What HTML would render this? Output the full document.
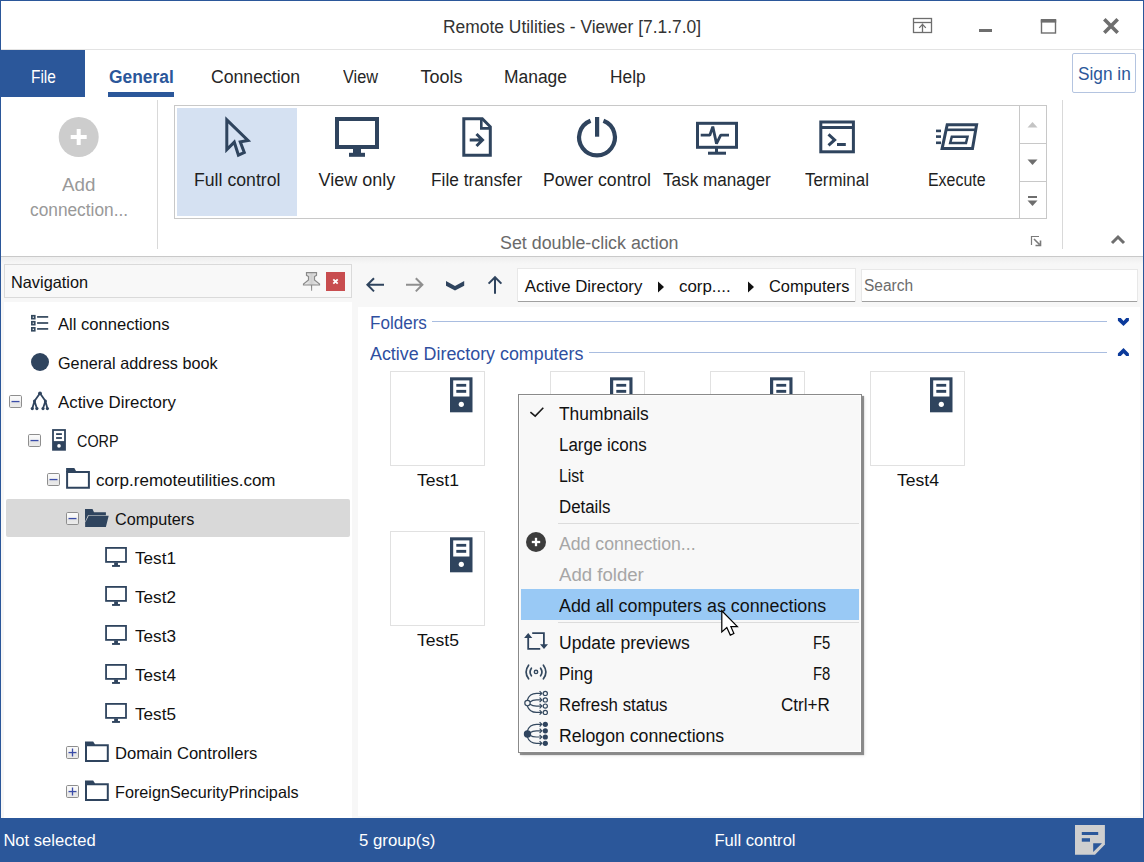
<!DOCTYPE html>
<html><head><meta charset="utf-8"><title>Remote Utilities - Viewer</title>
<style>
html,body{margin:0;padding:0;}
body{width:1144px;height:862px;position:relative;overflow:hidden;background:#fff;font-family:"Liberation Sans",sans-serif;}
.t{position:absolute;white-space:nowrap;line-height:1;font-family:"Liberation Sans",sans-serif;}
svg{overflow:visible;}
</style></head><body>
<svg width="0" height="0" style="position:absolute"><defs><linearGradient id="eg" x1="0" y1="0" x2="0" y2="1"><stop offset="0" stop-color="#fbfbfb"/><stop offset="0.5" stop-color="#f3f3f3"/><stop offset="0.55" stop-color="#e4e4e4"/><stop offset="1" stop-color="#ececec"/></linearGradient></defs></svg>
<div style="position:absolute;left:0px;top:0px;width:1144px;height:862px;background:#ffffff"></div>
<div style="position:absolute;left:0px;top:257px;width:1144px;height:561px;background:#f7f7f7"></div>
<div style="position:absolute;left:0px;top:256px;width:1144px;height:1px;background:#c9c9c9"></div>
<div style="position:absolute;left:1px;top:257px;width:1142px;height:7px;background:linear-gradient(#eeeeee,#f7f7f7)"></div>
<div style="position:absolute;left:0px;top:49px;width:1144px;height:1px;background:#e3e3e3"></div>
<div style="position:absolute;left:0px;top:0px;width:1144px;height:1px;background:#2b579a"></div>
<div style="position:absolute;left:0px;top:0px;width:1px;height:862px;background:#2b579a"></div>
<div style="position:absolute;left:1143px;top:0px;width:1px;height:862px;background:#2b579a"></div>
<div class="t" style="left:442.7px;top:18.0px;font-size:18px;color:#333;transform:scaleX(0.9674);transform-origin:0 0;">Remote Utilities - Viewer [7.1.7.0]</div>
<svg style="position:absolute;left:912px;top:17px;" width="22" height="18" viewBox="0 0 22 18"><rect x="1.5" y="1.5" width="18" height="14" fill="none" stroke="#6e6e6e" stroke-width="1.3"/><line x1="1.5" y1="5.5" x2="19.5" y2="5.5" stroke="#6e6e6e" stroke-width="1.3"/><path d="M10.5 15.5 V6.5 M7.2 10.9 L10.5 7.4 L13.8 10.9" fill="none" stroke="#6e6e6e" stroke-width="1.3"/></svg>
<div style="position:absolute;left:979px;top:29px;width:13px;height:3px;background:#6e6e6e"></div>
<svg style="position:absolute;left:1040px;top:18px;" width="17" height="16" viewBox="0 0 17 16"><rect x="1.5" y="2.5" width="14" height="12.5" fill="none" stroke="#6e6e6e" stroke-width="1.4"/><rect x="0.8" y="1" width="15.4" height="3.6" fill="#6e6e6e"/></svg>
<svg style="position:absolute;left:1102px;top:17px;" width="18" height="18" viewBox="0 0 18 18"><path d="M2.3 2.3 L15.7 15.7 M15.7 2.3 L2.3 15.7" stroke="#6e6e6e" stroke-width="3.6"/></svg>
<div style="position:absolute;left:1px;top:50px;width:84px;height:47px;background:#2b579a"></div>
<div class="t" style="left:30.9px;top:68.0px;font-size:18px;color:#fff;transform:scaleX(0.8586);transform-origin:0 0;">File</div>
<div class="t" style="left:108.6px;top:68.0px;font-size:18px;color:#2b579a;font-weight:bold;transform:scaleX(0.9657);transform-origin:0 0;">General</div>
<div style="position:absolute;left:108px;top:92px;width:66px;height:5px;background:#2b579a"></div>
<div class="t" style="left:211.4px;top:68.0px;font-size:18px;color:#262626;transform:scaleX(0.9791);transform-origin:0 0;">Connection</div>
<div class="t" style="left:342.5px;top:68.0px;font-size:18px;color:#262626;transform:scaleX(0.9050);transform-origin:0 0;">View</div>
<div class="t" style="left:420.5px;top:68.0px;font-size:18px;color:#262626;">Tools</div>
<div class="t" style="left:504.4px;top:68.0px;font-size:18px;color:#262626;transform:scaleX(0.9677);transform-origin:0 0;">Manage</div>
<div class="t" style="left:610.0px;top:68.0px;font-size:18px;color:#262626;transform:scaleX(0.9622);transform-origin:0 0;">Help</div>
<div style="position:absolute;left:1072px;top:53px;width:64px;height:40px;border:1px solid #b4c4e0;box-sizing:border-box;border-radius:2px;background:#fff"></div>
<div class="t" style="left:1077.6px;top:65.0px;font-size:18px;color:#2b579a;transform:scaleX(0.9582);transform-origin:0 0;">Sign in</div>
<svg style="position:absolute;left:58px;top:116px;" width="42" height="42" viewBox="0 0 42 42"><circle cx="20.7" cy="21" r="20" fill="#cdcdcd"/><rect x="18.7" y="13" width="4" height="16" fill="#fff"/><rect x="12.7" y="19" width="16" height="4" fill="#fff"/></svg>
<div class="t" style="left:62.0px;top:176.0px;font-size:18px;color:#999;transform:scaleX(1.0437);transform-origin:0 0;">Add</div>
<div class="t" style="left:30.2px;top:201.0px;font-size:18px;color:#999;transform:scaleX(0.9608);transform-origin:0 0;">connection...</div>
<div style="position:absolute;left:157px;top:100px;width:1px;height:149px;background:#d9d9d9"></div>
<div style="position:absolute;left:174px;top:105px;width:873px;height:114px;border:1px solid #c8c8c8;box-sizing:border-box;background:#fff"></div>
<div style="position:absolute;left:1019px;top:105px;width:1px;height:114px;background:#c8c8c8"></div>
<div style="position:absolute;left:1019px;top:143px;width:28px;height:1px;background:#c8c8c8"></div>
<div style="position:absolute;left:1019px;top:181px;width:28px;height:1px;background:#c8c8c8"></div>
<div style="position:absolute;left:177px;top:108px;width:120px;height:108px;background:#d5e1f2"></div>
<svg style="position:absolute;left:1027px;top:121px;" width="11" height="7" viewBox="0 0 11 7"><path d="M0.5 6.5 L5.5 1 L10.5 6.5 Z" fill="#c4c4c4"/></svg>
<svg style="position:absolute;left:1027px;top:159px;" width="11" height="7" viewBox="0 0 11 7"><path d="M0.5 0.5 L5.5 6 L10.5 0.5 Z" fill="#6e6e6e"/></svg>
<div style="position:absolute;left:1028px;top:196px;width:9px;height:2px;background:#6e6e6e"></div>
<svg style="position:absolute;left:1027px;top:200px;" width="11" height="7" viewBox="0 0 11 7"><path d="M0.5 0.5 L5.5 6 L10.5 0.5 Z" fill="#6e6e6e"/></svg>
<div class="t" style="left:193.8px;top:171.0px;font-size:18px;color:#1f1f1f;transform:scaleX(0.9818);transform-origin:0 0;">Full control</div>
<div class="t" style="left:318.6px;top:171.0px;font-size:18px;color:#1f1f1f;">View only</div>
<div class="t" style="left:431.4px;top:171.0px;font-size:18px;color:#1f1f1f;transform:scaleX(0.9600);transform-origin:0 0;">File transfer</div>
<div class="t" style="left:543.0px;top:171.0px;font-size:18px;color:#1f1f1f;transform:scaleX(0.9818);transform-origin:0 0;">Power control</div>
<div class="t" style="left:663.2px;top:171.0px;font-size:18px;color:#1f1f1f;transform:scaleX(0.9522);transform-origin:0 0;">Task manager</div>
<div class="t" style="left:805.0px;top:171.0px;font-size:18px;color:#1f1f1f;transform:scaleX(0.9397);transform-origin:0 0;">Terminal</div>
<div class="t" style="left:928.2px;top:171.0px;font-size:18px;color:#1f1f1f;transform:scaleX(0.8846);transform-origin:0 0;">Execute</div>
<svg style="position:absolute;left:0px;top:0px;" width="300" height="200" viewBox="0 0 300 200"><path d="M225.30 116.30 L225.30 153.30 L233.60 144.90 L237.50 157.20 L246.20 153.30 L242.30 143.00 L251.20 141.50 Z M228.30 123.40 L228.30 146.00 L234.96 139.26 L239.34 153.09 L242.39 151.72 L238.20 140.65 L244.87 139.52 Z" fill="#2f445e" fill-rule="evenodd"/></svg>
<svg style="position:absolute;left:334px;top:116px;" width="46" height="42" viewBox="0 0 46 42"><rect x="3" y="3" width="40" height="28" fill="none" stroke="#2f445e" stroke-width="4"/><rect x="19" y="33" width="8" height="4" fill="#2f445e"/><rect x="15" y="36.8" width="16" height="4" fill="#2f445e"/></svg>
<svg style="position:absolute;left:460px;top:116px;" width="34" height="42" viewBox="0 0 34 42"><path d="M3.8 2.8 H22.3 L30.3 10.8 V39.2 H3.8 Z" fill="none" stroke="#2f445e" stroke-width="3"/><path d="M21.3 2.8 V12.4 H30.3" fill="none" stroke="#2f445e" stroke-width="2.6"/><path d="M9.7 23.9 H22 M16.5 18 L22.5 24 L16.5 30" fill="none" stroke="#2f445e" stroke-width="3"/></svg>
<svg style="position:absolute;left:575px;top:115px;" width="44" height="44" viewBox="0 0 44 44"><path d="M15.55 5.7 A17.9 17.9 0 1 0 28.45 5.7" fill="none" stroke="#2f445e" stroke-width="4.2"/><rect x="20" y="2" width="4.2" height="19.7" fill="#2f445e"/></svg>
<svg style="position:absolute;left:694px;top:120px;" width="46" height="38" viewBox="0 0 46 38"><rect x="3.5" y="3.3" width="39" height="24" fill="none" stroke="#2f445e" stroke-width="3"/><rect x="21" y="28" width="3" height="4" fill="#2f445e"/><rect x="14" y="31.7" width="18" height="3" fill="#2f445e"/><path d="M6.7 15.2 H15.8 L18.8 6.6 L22.5 23.6 L26.7 15.2 H35" fill="none" stroke="#2f445e" stroke-width="2.8" stroke-linejoin="bevel"/></svg>
<svg style="position:absolute;left:817px;top:118px;" width="40" height="38" viewBox="0 0 40 38"><rect x="3.8" y="4" width="32.6" height="29.8" fill="none" stroke="#2f445e" stroke-width="3"/><rect x="3.8" y="8" width="32.6" height="3" fill="#2f445e"/><path d="M11.5 16.4 L17.6 21.9 L11.5 27.4" fill="none" stroke="#2f445e" stroke-width="3"/><rect x="20" y="25" width="8.8" height="3" fill="#2f445e"/></svg>
<svg style="position:absolute;left:933px;top:120px;" width="48" height="34" viewBox="0 0 48 34"><path d="M14.2 4.7 H43.6 L39.5 28.6 H9.1 Z" fill="none" stroke="#2f445e" stroke-width="3"/><path d="M13.5 9.8 H42.5" stroke="#2f445e" stroke-width="2.6"/><path d="M18.8 16.8 H34.5 L33 23 H17.2 Z" fill="none" stroke="#2f445e" stroke-width="2.5"/><rect x="3" y="9.6" width="5" height="2.6" fill="#2f445e"/><rect x="3" y="15.3" width="5" height="2.6" fill="#2f445e"/><rect x="3" y="21.5" width="5" height="2.6" fill="#2f445e"/></svg>
<div class="t" style="left:500.3px;top:234.0px;font-size:18px;color:#6a6a6a;transform:scaleX(0.9911);transform-origin:0 0;">Set double-click action</div>
<svg style="position:absolute;left:1030px;top:235px;" width="12" height="12" viewBox="0 0 12 12"><path d="M1.5 10 V1.5 H9" fill="none" stroke="#7a7a7a" stroke-width="1.2"/><path d="M4 4 L9.5 9.5 M10.5 5.5 V10.5 H5.5" fill="none" stroke="#7a7a7a" stroke-width="1.6"/></svg>
<div style="position:absolute;left:1062px;top:100px;width:1px;height:149px;background:#d9d9d9"></div>
<svg style="position:absolute;left:1110px;top:234px;" width="16" height="11" viewBox="0 0 16 11"><path d="M2 9 L8 3 L14 9" fill="none" stroke="#6e6e6e" stroke-width="3"/></svg>
<div style="position:absolute;left:4px;top:264px;width:348px;height:34px;border:1px solid #dadada;box-sizing:border-box;background:#f8f8f8"></div>
<div class="t" style="left:10.5px;top:274.0px;font-size:16.5px;color:#111;transform:scaleX(0.9885);transform-origin:0 0;">Navigation</div>
<svg style="position:absolute;left:300px;top:270px;" width="24" height="24" viewBox="0 0 24 24"><defs><linearGradient id="pg" x1="0" x2="1"><stop offset="0" stop-color="#f4f4f4"/><stop offset="0.5" stop-color="#d0d0d0"/><stop offset="1" stop-color="#f0f0f0"/></linearGradient></defs><path d="M6.5 2.7 H16.5 V5.3 L14.5 6.5 V10 L19.5 14 V15 H3.5 V14 L8.5 10 V6.5 L6.5 5.3 Z" fill="url(#pg)" stroke="#8a8a8a" stroke-width="1.2"/><path d="M10.9 15 H12.1 V20.5 L11.2 21 Z" fill="#8a8a8a"/></svg>
<div style="position:absolute;left:326px;top:272px;width:19px;height:19px;background:#c84d4f"></div>
<svg style="position:absolute;left:326px;top:272px;" width="19" height="19" viewBox="0 0 19 19"><path d="M7.3 7.3 L11.7 11.7 M11.7 7.3 L7.3 11.7" stroke="#fff" stroke-width="1.8"/></svg>
<div style="position:absolute;left:4px;top:302px;width:348px;height:516px;background:#fff"></div>
<div style="position:absolute;left:6px;top:499px;width:344px;height:38px;background:#d9d9d9;border-radius:2px"></div>
<div class="t" style="left:58.3px;top:316.0px;font-size:16.5px;color:#111;transform:scaleX(1.0045);transform-origin:0 0;">All connections</div>
<div class="t" style="left:58.3px;top:355.0px;font-size:16.5px;color:#111;transform:scaleX(0.9828);transform-origin:0 0;">General address book</div>
<div class="t" style="left:58.3px;top:394.0px;font-size:16.5px;color:#111;transform:scaleX(1.0207);transform-origin:0 0;">Active Directory</div>
<div class="t" style="left:77.1px;top:433.0px;font-size:16.5px;color:#111;transform:scaleX(0.8708);transform-origin:0 0;">CORP</div>
<div class="t" style="left:96.0px;top:472.0px;font-size:16.5px;color:#111;transform:scaleX(1.0305);transform-origin:0 0;">corp.remoteutilities.com</div>
<div class="t" style="left:114.9px;top:511.0px;font-size:16.5px;color:#111;transform:scaleX(0.9827);transform-origin:0 0;">Computers</div>
<div class="t" style="left:134.5px;top:550.0px;font-size:16.5px;color:#111;transform:scaleX(1.0385);transform-origin:0 0;">Test1</div>
<div class="t" style="left:134.5px;top:589.0px;font-size:16.5px;color:#111;transform:scaleX(1.0385);transform-origin:0 0;">Test2</div>
<div class="t" style="left:134.5px;top:628.0px;font-size:16.5px;color:#111;transform:scaleX(1.0385);transform-origin:0 0;">Test3</div>
<div class="t" style="left:134.5px;top:667.0px;font-size:16.5px;color:#111;transform:scaleX(1.0385);transform-origin:0 0;">Test4</div>
<div class="t" style="left:134.5px;top:706.0px;font-size:16.5px;color:#111;transform:scaleX(1.0385);transform-origin:0 0;">Test5</div>
<div class="t" style="left:115.0px;top:745.0px;font-size:16.5px;color:#111;transform:scaleX(1.0071);transform-origin:0 0;">Domain Controllers</div>
<div class="t" style="left:115.0px;top:784.0px;font-size:16.5px;color:#111;transform:scaleX(0.9813);transform-origin:0 0;">ForeignSecurityPrincipals</div>
<svg style="position:absolute;left:9px;top:395px;" width="13" height="13" viewBox="0 0 13 13"><rect x="0.5" y="0.5" width="12" height="12" rx="1.2" fill="url(#eg)" stroke="#8e8e8e"/><rect x="2.5" y="5.9" width="8" height="1.3" fill="#3a4ca8"/></svg>
<svg style="position:absolute;left:28px;top:434px;" width="13" height="13" viewBox="0 0 13 13"><rect x="0.5" y="0.5" width="12" height="12" rx="1.2" fill="url(#eg)" stroke="#8e8e8e"/><rect x="2.5" y="5.9" width="8" height="1.3" fill="#3a4ca8"/></svg>
<svg style="position:absolute;left:47px;top:473px;" width="13" height="13" viewBox="0 0 13 13"><rect x="0.5" y="0.5" width="12" height="12" rx="1.2" fill="url(#eg)" stroke="#8e8e8e"/><rect x="2.5" y="5.9" width="8" height="1.3" fill="#3a4ca8"/></svg>
<svg style="position:absolute;left:66px;top:512px;" width="13" height="13" viewBox="0 0 13 13"><rect x="0.5" y="0.5" width="12" height="12" rx="1.2" fill="url(#eg)" stroke="#8e8e8e"/><rect x="2.5" y="5.9" width="8" height="1.3" fill="#3a4ca8"/></svg>
<svg style="position:absolute;left:66px;top:746px;" width="13" height="13" viewBox="0 0 13 13"><rect x="0.5" y="0.5" width="12" height="12" rx="1.2" fill="url(#eg)" stroke="#8e8e8e"/><rect x="2.5" y="5.9" width="8" height="1.3" fill="#3a4ca8"/><rect x="5.85" y="2.5" width="1.3" height="8" fill="#3a4ca8"/></svg>
<svg style="position:absolute;left:66px;top:785px;" width="13" height="13" viewBox="0 0 13 13"><rect x="0.5" y="0.5" width="12" height="12" rx="1.2" fill="url(#eg)" stroke="#8e8e8e"/><rect x="2.5" y="5.9" width="8" height="1.3" fill="#3a4ca8"/><rect x="5.85" y="2.5" width="1.3" height="8" fill="#3a4ca8"/></svg>
<svg style="position:absolute;left:0px;top:0px;" width="10" height="10" viewBox="0 0 10 10"><g fill="none" stroke="#34495e" stroke-width="1.7"><rect x="31.85" y="315.75" width="2.9" height="2.9"/><rect x="31.85" y="321.75" width="2.9" height="2.9"/><rect x="31.85" y="327.85" width="2.9" height="2.9"/></g><g fill="#3d5064"><rect x="37.1" y="316" width="11.1" height="1.8"/><rect x="37.1" y="322.1" width="11.1" height="1.8"/><rect x="37.1" y="328" width="11.1" height="1.8"/></g><circle cx="40" cy="362" r="9" fill="#2f445e"/></svg>
<svg style="position:absolute;left:0px;top:0px;" width="60" height="420" viewBox="0 0 60 420"><g fill="none" stroke="#2f445e" stroke-width="1.8"><path d="M40 393.3 L34.5 401 M40 393.3 L45.4 401 M34.5 401 L32.3 408.6 M34.5 401 L36.9 408.6 M45.4 401 L43 408.6 M45.4 401 L47.4 408.6"/></g><g fill="#2f445e"><circle cx="40" cy="393.3" r="1.9"/><circle cx="34.5" cy="401" r="1.5"/><circle cx="45.4" cy="401" r="1.5"/><circle cx="32.3" cy="408.6" r="1.6"/><circle cx="36.9" cy="408.6" r="1.6"/><circle cx="43" cy="408.6" r="1.6"/><circle cx="47.4" cy="408.6" r="1.6"/></g></svg>
<svg style="position:absolute;left:0px;top:0px;" width="10" height="10" viewBox="0 0 10 10"><rect x="52.1" y="429.1" width="13.8" height="21.6" fill="#2f445e"/><rect x="53.9" y="430.9" width="10.2" height="10.2" fill="#fff"/><rect x="56.1" y="433.2" width="5.8" height="1.8" fill="#2f445e"/><rect x="56.1" y="437.1" width="5.8" height="1.8" fill="#2f445e"/><circle cx="59" cy="445.9" r="1.8" fill="#fff"/></svg>
<svg style="position:absolute;left:0px;top:0px;" width="10" height="10" viewBox="0 0 10 10"><g transform="translate(66.1,468.1)"><path d="M1 3.8 H22.8 V19.7 H1 Z" fill="none" stroke="#2f445e" stroke-width="2"/><path d="M0 0 H8.2 L9.9 2.8 V4.2 H0 Z" fill="#2f445e"/></g></svg>
<svg style="position:absolute;left:0px;top:0px;" width="10" height="10" viewBox="0 0 10 10"><g transform="translate(85,741.4)"><path d="M1 3.8 H22.8 V19.7 H1 Z" fill="none" stroke="#2f445e" stroke-width="2"/><path d="M0 0 H8.2 L9.9 2.8 V4.2 H0 Z" fill="#2f445e"/></g></svg>
<svg style="position:absolute;left:0px;top:0px;" width="10" height="10" viewBox="0 0 10 10"><g transform="translate(85,780.4)"><path d="M1 3.8 H22.8 V19.7 H1 Z" fill="none" stroke="#2f445e" stroke-width="2"/><path d="M0 0 H8.2 L9.9 2.8 V4.2 H0 Z" fill="#2f445e"/></g></svg>
<svg style="position:absolute;left:0px;top:0px;" width="10" height="10" viewBox="0 0 10 10"><g transform="translate(85,509.1)"><path d="M0 0 H7.5 L9 3.2 H20.9 V6.1 H3.0 L0.2 12.5 V17.9 H0 Z" fill="#2f445e"/><path d="M3.7 6.6 H23.7 L20.9 17.9 H0.2 V13.4 Z" fill="#2f445e"/></g></svg>
<svg style="position:absolute;left:0px;top:0px;" width="10" height="10" viewBox="0 0 10 10"><g transform="translate(105.15,547)"><rect x="0.9" y="0.9" width="19.95" height="14" fill="none" stroke="#2f445e" stroke-width="1.8"/><rect x="9" y="15.5" width="3.8" height="3" fill="#2f445e"/><rect x="6.9" y="18" width="7.9" height="1.9" fill="#2f445e"/></g></svg>
<svg style="position:absolute;left:0px;top:0px;" width="10" height="10" viewBox="0 0 10 10"><g transform="translate(105.15,586)"><rect x="0.9" y="0.9" width="19.95" height="14" fill="none" stroke="#2f445e" stroke-width="1.8"/><rect x="9" y="15.5" width="3.8" height="3" fill="#2f445e"/><rect x="6.9" y="18" width="7.9" height="1.9" fill="#2f445e"/></g></svg>
<svg style="position:absolute;left:0px;top:0px;" width="10" height="10" viewBox="0 0 10 10"><g transform="translate(105.15,625)"><rect x="0.9" y="0.9" width="19.95" height="14" fill="none" stroke="#2f445e" stroke-width="1.8"/><rect x="9" y="15.5" width="3.8" height="3" fill="#2f445e"/><rect x="6.9" y="18" width="7.9" height="1.9" fill="#2f445e"/></g></svg>
<svg style="position:absolute;left:0px;top:0px;" width="10" height="10" viewBox="0 0 10 10"><g transform="translate(105.15,664)"><rect x="0.9" y="0.9" width="19.95" height="14" fill="none" stroke="#2f445e" stroke-width="1.8"/><rect x="9" y="15.5" width="3.8" height="3" fill="#2f445e"/><rect x="6.9" y="18" width="7.9" height="1.9" fill="#2f445e"/></g></svg>
<svg style="position:absolute;left:0px;top:0px;" width="10" height="10" viewBox="0 0 10 10"><g transform="translate(105.15,703)"><rect x="0.9" y="0.9" width="19.95" height="14" fill="none" stroke="#2f445e" stroke-width="1.8"/><rect x="9" y="15.5" width="3.8" height="3" fill="#2f445e"/><rect x="6.9" y="18" width="7.9" height="1.9" fill="#2f445e"/></g></svg>
<svg style="position:absolute;left:364px;top:276px;" width="22" height="18" viewBox="0 0 22 18"><path d="M20 8.8 H4 M10 2.2 L3.4 8.8 L10 15.4" fill="none" stroke="#2f445e" stroke-width="2"/></svg>
<svg style="position:absolute;left:404px;top:276px;" width="22" height="18" viewBox="0 0 22 18"><path d="M2 8.8 H18 M11.8 2.2 L18.4 8.8 L11.8 15.4" fill="none" stroke="#8f8f8f" stroke-width="2"/></svg>
<svg style="position:absolute;left:0px;top:0px;" width="10" height="10" viewBox="0 0 10 10"><path d="M446 281.1 L455 285.9 L464.2 281.1 V285.7 L455 290.6 L446 285.7 Z" fill="#2f445e"/></svg>
<svg style="position:absolute;left:486px;top:275px;" width="18" height="20" viewBox="0 0 18 20"><path d="M9 18.8 V2.5 M2.6 8.6 L9 2.2 L15.4 8.6" fill="none" stroke="#2f445e" stroke-width="2"/></svg>
<div style="position:absolute;left:518px;top:269px;width:337px;height:32px;background:#fff;box-shadow:0 1px 0 #a0a0a0, 0 0 0 1px #e8e8e8"></div>
<div class="t" style="left:524.8px;top:279.0px;font-size:16.8px;color:#111;">Active Directory</div>
<svg style="position:absolute;left:657px;top:281px;" width="8" height="12" viewBox="0 0 8 12"><path d="M1 0.5 L7 6 L1 11.5 Z" fill="#111"/></svg>
<div class="t" style="left:679.0px;top:279.0px;font-size:16.8px;color:#111;transform:scaleX(1.0059);transform-origin:0 0;">corp....</div>
<svg style="position:absolute;left:747px;top:281px;" width="8" height="12" viewBox="0 0 8 12"><path d="M1 0.5 L7 6 L1 11.5 Z" fill="#111"/></svg>
<div class="t" style="left:768.6px;top:279.0px;font-size:16.8px;color:#111;transform:scaleX(0.9793);transform-origin:0 0;">Computers</div>
<div style="position:absolute;left:862px;top:270px;width:275px;height:31px;background:#fff;box-shadow:0 1px 0 #a0a0a0, 0 0 0 1px #e8e8e8"></div>
<div class="t" style="left:864.1px;top:278.0px;font-size:16px;color:#6b6b6b;transform:scaleX(0.9686);transform-origin:0 0;">Search</div>
<div style="position:absolute;left:358px;top:307px;width:782px;height:509px;background:#fff"></div>
<div class="t" style="left:370.4px;top:314.0px;font-size:18px;color:#2f4f9f;transform:scaleX(0.9467);transform-origin:0 0;">Folders</div>
<div style="position:absolute;left:432px;top:321px;width:675px;height:1px;background:#a9bde0"></div>
<div class="t" style="left:370.4px;top:344.5px;font-size:18px;color:#2f4f9f;transform:scaleX(0.9921);transform-origin:0 0;">Active Directory computers</div>
<div style="position:absolute;left:589px;top:352px;width:518px;height:1px;background:#a9bde0"></div>
<svg style="position:absolute;left:0px;top:0px;" width="10" height="10" viewBox="0 0 10 10"><path d="M1117.9 318.1 H1120.8 L1123.5 321 L1126.2 318.1 H1128.9 V320.7 L1123.5 326 L1117.9 320.7 Z M1117.9 356.1 H1120.8 L1123.5 353.2 L1126.2 356.1 H1128.9 V353.5 L1123.5 348 L1117.9 353.5 Z" fill="#0b3a9b"/></svg>
<div style="position:absolute;left:390px;top:371px;width:95px;height:95px;border:1px solid #e1e1e1;box-sizing:border-box;background:#fff"></div>
<svg style="position:absolute;left:450px;top:377px;" width="23" height="36" viewBox="0 0 23 36"><rect x="0" y="0.3" width="22.5" height="35" fill="#2f445e"/><rect x="3.2" y="3.4" width="16.2" height="16.1" fill="#fff"/><rect x="6.3" y="6.9" width="9.9" height="2.8" fill="#2f445e"/><rect x="6.3" y="12.9" width="9.9" height="2.9" fill="#2f445e"/><circle cx="11.3" cy="27.3" r="2.6" fill="#fff"/></svg>
<div class="t" style="left:416.8px;top:472.0px;font-size:16.5px;color:#111;transform:scaleX(1.0641);transform-origin:0 0;">Test1</div>
<div style="position:absolute;left:550px;top:371px;width:95px;height:95px;border:1px solid #e1e1e1;box-sizing:border-box;background:#fff"></div>
<svg style="position:absolute;left:610px;top:377px;" width="23" height="36" viewBox="0 0 23 36"><rect x="0" y="0.3" width="22.5" height="35" fill="#2f445e"/><rect x="3.2" y="3.4" width="16.2" height="16.1" fill="#fff"/><rect x="6.3" y="6.9" width="9.9" height="2.8" fill="#2f445e"/><rect x="6.3" y="12.9" width="9.9" height="2.9" fill="#2f445e"/><circle cx="11.3" cy="27.3" r="2.6" fill="#fff"/></svg>
<div class="t" style="left:576.8px;top:472.0px;font-size:16.5px;color:#111;transform:scaleX(1.0641);transform-origin:0 0;">Test2</div>
<div style="position:absolute;left:710px;top:371px;width:95px;height:95px;border:1px solid #e1e1e1;box-sizing:border-box;background:#fff"></div>
<svg style="position:absolute;left:770px;top:377px;" width="23" height="36" viewBox="0 0 23 36"><rect x="0" y="0.3" width="22.5" height="35" fill="#2f445e"/><rect x="3.2" y="3.4" width="16.2" height="16.1" fill="#fff"/><rect x="6.3" y="6.9" width="9.9" height="2.8" fill="#2f445e"/><rect x="6.3" y="12.9" width="9.9" height="2.9" fill="#2f445e"/><circle cx="11.3" cy="27.3" r="2.6" fill="#fff"/></svg>
<div class="t" style="left:736.8px;top:472.0px;font-size:16.5px;color:#111;transform:scaleX(1.0641);transform-origin:0 0;">Test3</div>
<div style="position:absolute;left:870px;top:371px;width:95px;height:95px;border:1px solid #e1e1e1;box-sizing:border-box;background:#fff"></div>
<svg style="position:absolute;left:930px;top:377px;" width="23" height="36" viewBox="0 0 23 36"><rect x="0" y="0.3" width="22.5" height="35" fill="#2f445e"/><rect x="3.2" y="3.4" width="16.2" height="16.1" fill="#fff"/><rect x="6.3" y="6.9" width="9.9" height="2.8" fill="#2f445e"/><rect x="6.3" y="12.9" width="9.9" height="2.9" fill="#2f445e"/><circle cx="11.3" cy="27.3" r="2.6" fill="#fff"/></svg>
<div class="t" style="left:896.8px;top:472.0px;font-size:16.5px;color:#111;transform:scaleX(1.0641);transform-origin:0 0;">Test4</div>
<div style="position:absolute;left:390px;top:531px;width:95px;height:95px;border:1px solid #e1e1e1;box-sizing:border-box;background:#fff"></div>
<svg style="position:absolute;left:450px;top:537px;" width="23" height="36" viewBox="0 0 23 36"><rect x="0" y="0.3" width="22.5" height="35" fill="#2f445e"/><rect x="3.2" y="3.4" width="16.2" height="16.1" fill="#fff"/><rect x="6.3" y="6.9" width="9.9" height="2.8" fill="#2f445e"/><rect x="6.3" y="12.9" width="9.9" height="2.9" fill="#2f445e"/><circle cx="11.3" cy="27.3" r="2.6" fill="#fff"/></svg>
<div class="t" style="left:416.8px;top:632.0px;font-size:16.5px;color:#111;transform:scaleX(1.0641);transform-origin:0 0;">Test5</div>
<div style="position:absolute;left:518px;top:394px;width:344px;height:359px;background:#f8f8f8;border:1px solid #8a8a8a;box-sizing:border-box;box-shadow:inset 0 0 0 1px #fdfdfd, 2px 2px 0.8px rgba(0,0,0,0.42), 3px 3px 3px rgba(0,0,0,0.08)"></div>
<svg style="position:absolute;left:528px;top:405px;" width="18" height="14" viewBox="0 0 18 14"><path d="M2.4 7.1 L7.2 11.1 L15.3 2.7" fill="none" stroke="#1a1a1a" stroke-width="1.6"/></svg>
<div class="t" style="left:558.7px;top:405.0px;font-size:18px;color:#111;transform:scaleX(0.9645);transform-origin:0 0;">Thumbnails</div>
<div class="t" style="left:558.7px;top:436.0px;font-size:18px;color:#111;transform:scaleX(0.9419);transform-origin:0 0;">Large icons</div>
<div class="t" style="left:558.7px;top:467.0px;font-size:18px;color:#111;transform:scaleX(0.8821);transform-origin:0 0;">List</div>
<div class="t" style="left:558.7px;top:497.5px;font-size:18px;color:#111;transform:scaleX(0.9364);transform-origin:0 0;">Details</div>
<div style="position:absolute;left:558px;top:523px;width:301px;height:1px;background:#dcdcdc"></div>
<svg style="position:absolute;left:526px;top:532px;" width="21" height="21" viewBox="0 0 21 21"><circle cx="10" cy="10" r="10" fill="#3d3d3d"/><rect x="8.85" y="5.8" width="2.3" height="8.4" fill="#fff"/><rect x="5.8" y="8.85" width="8.4" height="2.3" fill="#fff"/></svg>
<div class="t" style="left:558.5px;top:535.0px;font-size:18px;color:#a6a6a6;transform:scaleX(0.9820);transform-origin:0 0;">Add connection...</div>
<div class="t" style="left:558.5px;top:566.0px;font-size:18px;color:#a6a6a6;transform:scaleX(1.0329);transform-origin:0 0;">Add folder</div>
<div style="position:absolute;left:521px;top:589px;width:338px;height:31px;background:#99c9f5"></div>
<div class="t" style="left:558.5px;top:597.0px;font-size:18px;color:#111;transform:scaleX(0.9926);transform-origin:0 0;">Add all computers as connections</div>
<div style="position:absolute;left:558px;top:622px;width:301px;height:1px;background:#dcdcdc"></div>
<div class="t" style="left:558.6px;top:634.0px;font-size:18px;color:#111;transform:scaleX(0.9746);transform-origin:0 0;">Update previews</div>
<div class="t" style="left:558.6px;top:665.0px;font-size:18px;color:#111;transform:scaleX(0.9389);transform-origin:0 0;">Ping</div>
<div class="t" style="left:558.6px;top:696.0px;font-size:18px;color:#111;transform:scaleX(0.9353);transform-origin:0 0;">Refresh status</div>
<div class="t" style="left:558.6px;top:727.0px;font-size:18px;color:#111;transform:scaleX(0.9821);transform-origin:0 0;">Relogon connections</div>
<div class="t" style="left:813.0px;top:634.0px;font-size:18px;color:#111;transform:scaleX(0.8238);transform-origin:0 0;">F5</div>
<div class="t" style="left:813.0px;top:665.0px;font-size:18px;color:#111;transform:scaleX(0.8238);transform-origin:0 0;">F8</div>
<div class="t" style="left:781.2px;top:696.0px;font-size:18px;color:#111;transform:scaleX(0.9481);transform-origin:0 0;">Ctrl+R</div>
<svg style="position:absolute;left:0px;top:0px;" width="10" height="10" viewBox="0 0 10 10"><path d="M528.2 636.5 V648.9 H540.2 M532.2 633.2 H543.9 V645" fill="none" stroke="#2f445e" stroke-width="1.8"/><path d="M528.2 633.1 L524.1 637.9 H532.3 Z M540.0 644.2 H548.0 L544 648.9 Z" fill="#2f445e"/></svg>
<svg style="position:absolute;left:0px;top:0px;" width="10" height="10" viewBox="0 0 10 10"><g fill="none" stroke="#34495f" stroke-width="1.7" stroke-linecap="round"><path d="M528.6 665.2 Q523.6 672 528.6 678.8"/><path d="M531.4 668.2 Q528.7 672 531.4 675.8"/><path d="M540.6 668.2 Q543.3 672 540.6 675.8"/><path d="M543.4 665.2 Q548.4 672 543.4 678.8"/></g><circle cx="536" cy="671.9" r="1.7" fill="none" stroke="#34495f" stroke-width="1.4"/></svg>
<svg style="position:absolute;left:0px;top:0px;" width="10" height="10" viewBox="0 0 10 10"><g fill="none" stroke="#34495f" stroke-width="1.2"><path d="M527.3 700.20 Q529.5 693.40 536.5 693.40 H541.6 M529.9 701.90 Q532.5 699.90 536.5 699.90 H541.6 M529.9 704.30 Q532.5 706.10 536.5 706.10 H541.6 M527.3 706.00 Q529.5 712.40 536.5 712.40 H541.6"/><path d="M539.60 691.20 L541.80 693.40 L539.60 695.60 M539.60 697.70 L541.80 699.90 L539.60 702.10 M539.60 703.90 L541.80 706.10 L539.60 708.30 M539.60 710.20 L541.80 712.40 L539.60 714.60"/><circle cx="527.5" cy="703.10" r="2.7"/><circle cx="545.3" cy="693.40" r="2.1"/><circle cx="545.3" cy="699.90" r="2.1"/><circle cx="545.3" cy="706.10" r="2.1"/><circle cx="545.3" cy="712.40" r="2.1"/></g></svg>
<svg style="position:absolute;left:0px;top:0px;" width="10" height="10" viewBox="0 0 10 10"><g fill="none" stroke="#34495f" stroke-width="1.2"><path d="M527.3 731.10 Q529.5 724.30 536.5 724.30 H541.6 M529.9 732.80 Q532.5 730.80 536.5 730.80 H541.6 M529.9 735.20 Q532.5 737.00 536.5 737.00 H541.6 M527.3 736.90 Q529.5 743.30 536.5 743.30 H541.6"/><path d="M539.60 722.10 L541.80 724.30 L539.60 726.50 M539.60 728.60 L541.80 730.80 L539.60 733.00 M539.60 734.80 L541.80 737.00 L539.60 739.20 M539.60 741.10 L541.80 743.30 L539.60 745.50"/></g><g fill="#2f445e"><circle cx="527.5" cy="734.00" r="3.7"/><circle cx="545.3" cy="724.30" r="2.6"/><circle cx="545.3" cy="730.80" r="2.6"/><circle cx="545.3" cy="737.00" r="2.6"/><circle cx="545.3" cy="743.30" r="2.6"/></g></svg>
<svg style="position:absolute;left:0px;top:0px;" width="10" height="10" viewBox="0 0 10 10"><path d="M721.8 610.8 L721.8 632 L726.8 627.6 L730.3 635.1 L733.9 633.5 L730.9 626.7 L737.4 626.7 Z" fill="#fff" stroke="#000" stroke-width="1.2" stroke-linejoin="miter"/></svg>
<div style="position:absolute;left:0px;top:818px;width:1144px;height:44px;background:#2b579a"></div>
<div class="t" style="left:3.4px;top:833.0px;font-size:16.6px;color:#fff;">Not selected</div>
<div class="t" style="left:358.7px;top:833.0px;font-size:16.6px;color:#fff;transform:scaleX(1.0105);transform-origin:0 0;">5 group(s)</div>
<div class="t" style="left:714.4px;top:833.0px;font-size:16.6px;color:#fff;">Full control</div>
<svg style="position:absolute;left:1074px;top:824px;" width="32" height="32" viewBox="0 0 32 32"><path d="M1 0.9 H30.9 V20.6 L21 30.8 H1 Z" fill="#cfcfcf"/><rect x="7.8" y="8" width="16.4" height="3" fill="#2b579a"/><rect x="7.8" y="14.2" width="8.2" height="3.5" fill="#2b579a"/><path d="M19.2 19.2 H28 L19.2 28 Z" fill="#2b579a"/></svg>
</body></html>
